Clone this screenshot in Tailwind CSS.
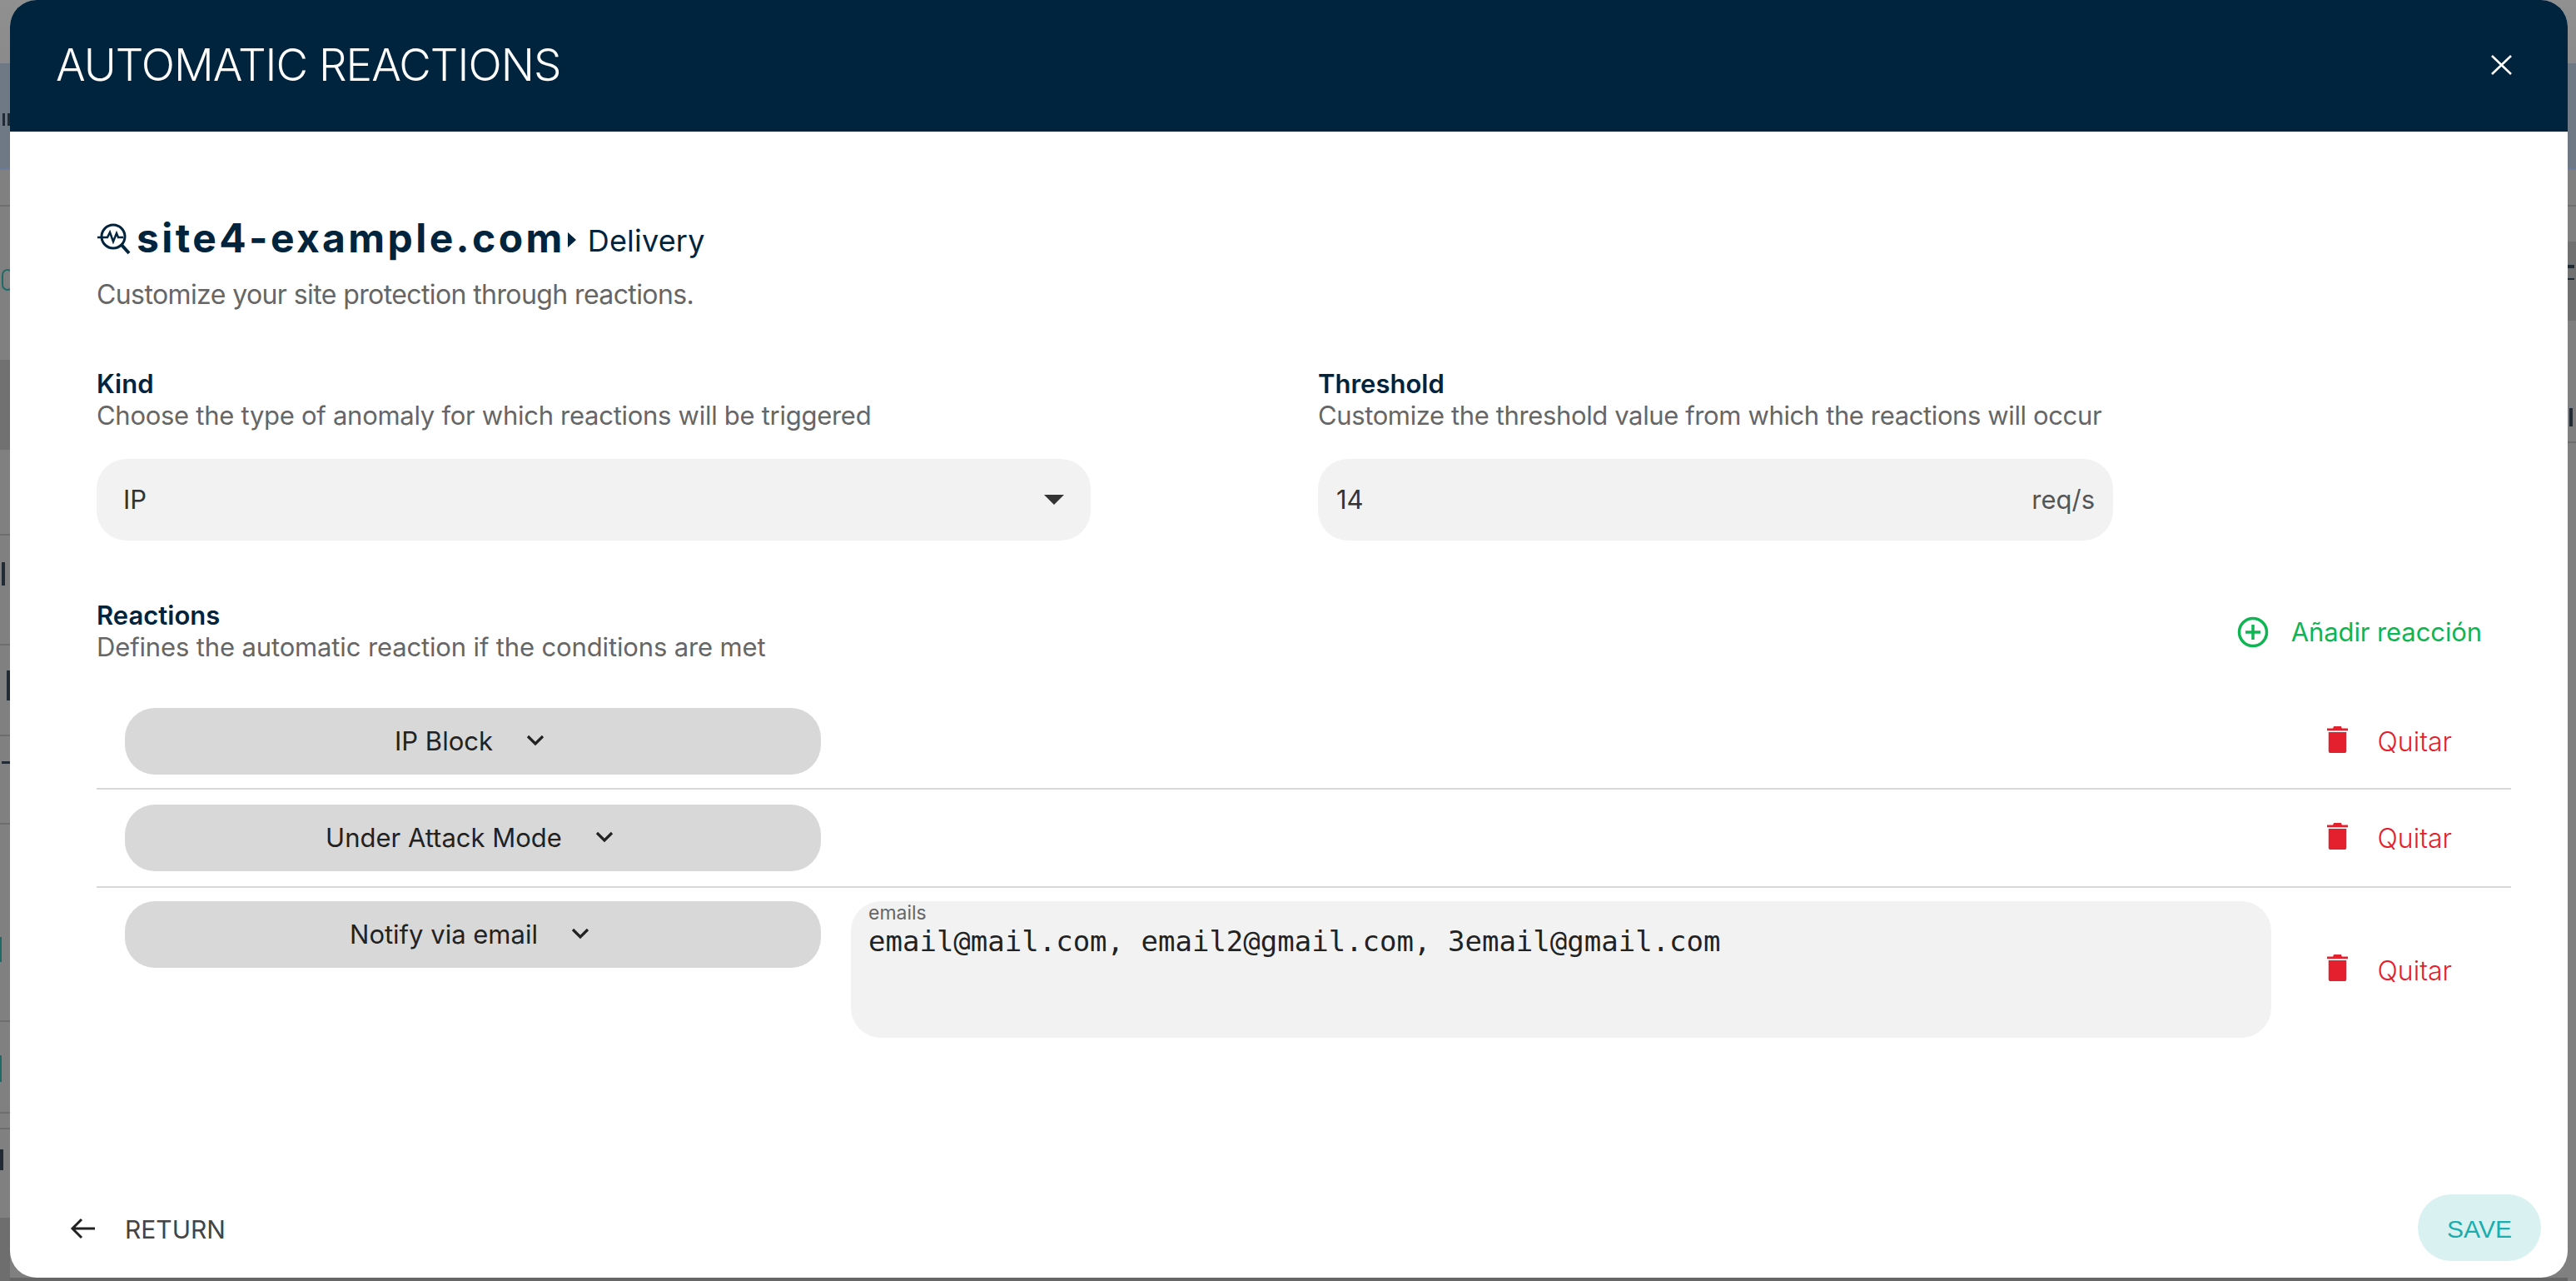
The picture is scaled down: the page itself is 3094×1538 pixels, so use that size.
<!DOCTYPE html>
<html lang="en">
<head>
    <meta charset="UTF-8">
    <title>Automatic Reactions</title>
    <script src="https://cdn.jsdelivr.net/npm/@tailwindcss/browser@4"></script>
</head>
<body class="h-[1538px] overflow-hidden flex bg-[linear-gradient(#909090_0,#808080_220px)] font-['Inter',sans-serif]">
    <!-- Page behind the modal, left edge -->
    <div class="w-3 shrink-0 flex flex-col">
        <div class="h-[76px]"></div>
        <div class="h-[128px] bg-[#6f7885] border-b-2 border-[#6a7c99] pt-[60px] flex gap-[3px] items-start justify-end"><div class="w-[3px] h-[15px] bg-[#222a33]"></div><div class="w-[3px] h-[15px] bg-[#222a33]"></div></div>
        <div class="h-[44px] border-b-2 border-[#6e6e6e]"></div>
        <div class="h-[184px] pt-[75px]"><div class="ml-[2px] w-[14px] h-[26px] rounded-full border-2 border-[#1f6a66]"></div></div>
        <div class="h-[108px] bg-[#717171]"></div>
        <div class="h-[103px] border-b-2 border-[#6e6e6e]"></div>
        <div class="h-[132px] border-b-2 border-[#6e6e6e] pt-[32px]"><div class="ml-[2px] w-1 h-[28px] bg-[#222a33]"></div></div>
        <div class="h-[109px] border-b-2 border-[#6e6e6e] pt-[30px]"><div class="ml-[8px] w-1 h-[36px] bg-[#222a33]"></div></div>
        <div class="h-[106px] border-b-2 border-[#6e6e6e] pt-[30px]"><div class="ml-[2px] w-[10px] h-[3px] bg-[#222a33]"></div></div>
        <div class="h-[165px] pt-[0px] flex flex-col justify-end"><div class="w-[2px] h-[30px] bg-[#1f6a66]"></div></div>
        <div class="h-[72px] border-b-2 border-[#6e6e6e]"></div>
        <div class="h-[40px]"></div>
        <div class="h-[70px] border-b-2 border-[#6e6e6e] pt-[0px]"><div class="w-[2px] h-[32px] bg-[#1f6a66]"></div></div>
        <div class="h-[19px] border-b-2 border-[#6e6e6e]"></div>
        <div class="h-[108px] border-b-2 border-[#6e6e6e] pt-[24px]"><div class="w-1 h-[25px] bg-[#222a33]"></div></div>
        <div class="flex-1 bg-[#6e6e6e]"></div>
    </div>

    <div class="w-[3072px] shrink-0 flex flex-col">
        <!-- Modal -->
        <div class="h-[1534px] shrink-0 bg-white rounded-[32px] overflow-hidden flex flex-col">
            <div class="h-[158px] shrink-0 bg-[#00243d] flex items-center justify-between pl-[55px] pr-[67px]">
                <h1 class="text-[53px] font-light text-white tracking-[-1px]">AUTOMATIC REACTIONS</h1>
                <svg class="w-[25px] h-[24px] -mt-[2px]" viewBox="0 0 25 24" fill="none" stroke="white" stroke-width="2.6"><path d="M1 1l23 22M24 1L1 23"/></svg>
            </div>

            <div class="flex-1 flex flex-col pl-[104px] pr-[68px] pt-[98px]">
                <!-- Site -->
                <div class="flex items-center h-[60px]">
                    <svg class="w-[42px] h-[42px] mr-[6px]" viewBox="0 0 42 42" fill="none" stroke="#00243d" stroke-width="3">
                        <circle cx="20" cy="19" r="14"/>
                        <path d="M30 29l9 10" stroke-width="4"/>
                        <path d="M1 20h12l3-6 4 11 4-10 2 5h6" stroke-width="2.5"/>
                    </svg>
                    <span class="text-[48px] font-bold text-[#00243d] tracking-[3.4px]">site4-example.com</span>
                    <svg class="w-[10px] h-[18px] ml-[3px] mt-[4px]" viewBox="0 0 10 18" fill="#00243d"><path d="M0 0l10 9-10 9z"/></svg>
                    <span class="ml-[14px] mt-[6px] text-[36px] tracking-[0.2px] text-[#00243d]">Delivery</span>
                </div>
                <p class="mt-[14px] text-[32px] text-[#666666] tracking-[-0.6px]">Customize your site protection through reactions.</p>

                <!-- Kind / Threshold -->
                <div class="mt-[64px] flex">
                    <div class="w-[1467px]">
                        <h3 class="text-[31px] leading-[38px] font-semibold text-[#00243d]">Kind</h3>
                        <p class="text-[31px] leading-[38px] text-[#666666] tracking-[-0.28px]">Choose the type of anomaly for which reactions will be triggered</p>
                        <div class="mt-[33px] w-[1194px] h-[98px] rounded-[36px] bg-[#f2f2f2] flex items-center justify-between pl-[32px] pr-[32px] text-[31px] text-[#333333]">
                            <span>IP</span>
                            <svg class="w-[24px] h-[12px]" viewBox="0 0 24 12" fill="#333333"><path d="M0 0h24L12 12z"/></svg>
                        </div>
                    </div>
                    <div>
                        <h3 class="text-[31px] leading-[38px] font-semibold text-[#00243d]">Threshold</h3>
                        <p class="text-[31px] leading-[38px] text-[#666666] tracking-[-0.38px]">Customize the threshold value from which the reactions will occur</p>
                        <div class="mt-[33px] w-[955px] h-[98px] rounded-[36px] bg-[#f2f2f2] flex items-center justify-between pl-[22px] pr-[22px] text-[31px] text-[#333333]">
                            <span>14</span>
                            <span class="text-[#555555]">req/s</span>
                        </div>
                    </div>
                </div>

                <!-- Reactions header -->
                <div class="mt-[71px] flex items-center justify-between">
                    <div>
                        <h3 class="text-[31px] leading-[38px] font-semibold text-[#00243d]">Reactions</h3>
                        <p class="text-[31px] leading-[38px] text-[#666666] tracking-[-0.14px]">Defines the automatic reaction if the conditions are met</p>
                    </div>
                    <div class="flex items-center pr-[35px] pt-[2px] text-[31px] tracking-[-0.1px] text-[#0fb553]">
                        <svg class="w-[38px] h-[38px] mr-[27px]" viewBox="0 0 38 38" fill="none" stroke="#0fb553" stroke-width="3.5"><circle cx="19" cy="19" r="16.5"/><path d="M19 10v18M10 19h18"/></svg>
                        <span>Añadir reacción</span>
                    </div>
                </div>

                <!-- Reaction rows -->
                <div class="mt-[50px]">
                    <div class="h-[102px] border-b-2 border-[#d8d8d8] flex pl-[34px] pr-[71px]">
                        <div class="mt-[4px] w-[836px] h-[80px] rounded-[36px] bg-[#d8d8d8] flex items-center justify-center gap-[40px] pr-[8px] text-[31px] text-[#222222]">
                            <span>IP Block</span>
                            <svg class="w-[22px] h-[14px] -mt-[2px]" viewBox="0 0 22 14" fill="none" stroke="#222222" stroke-width="3.2"><path d="M2 2l9 9 9-9"/></svg>
                        </div>
                        <div class="ml-auto mt-[21px] flex items-center h-[46px] text-[32px] font-light text-[#e5202e]">
                            <svg class="w-[27px] h-[34px] mr-[35px] -mt-[4px]" viewBox="0 0 28 38" fill="#e5202e"><path d="M9 1h10l1 3h8v3H0V4h8zM2 9h24v25a3 3 0 0 1-3 3H5a3 3 0 0 1-3-3z"/></svg>
                            <span class="mt-[2px]">Quitar</span>
                        </div>
                    </div>
                    <div class="h-[118px] border-b-2 border-[#d8d8d8] flex pl-[34px] pr-[71px]">
                        <div class="mt-[18px] w-[836px] h-[80px] rounded-[36px] bg-[#d8d8d8] flex items-center justify-center gap-[40px] pr-[8px] text-[31px] text-[#222222]">
                            <span>Under Attack Mode</span>
                            <svg class="w-[22px] h-[14px] -mt-[2px]" viewBox="0 0 22 14" fill="none" stroke="#222222" stroke-width="3.2"><path d="M2 2l9 9 9-9"/></svg>
                        </div>
                        <div class="ml-auto mt-[35px] flex items-center h-[46px] text-[32px] font-light text-[#e5202e]">
                            <svg class="w-[27px] h-[34px] mr-[35px] -mt-[4px]" viewBox="0 0 28 38" fill="#e5202e"><path d="M9 1h10l1 3h8v3H0V4h8zM2 9h24v25a3 3 0 0 1-3 3H5a3 3 0 0 1-3-3z"/></svg>
                            <span class="mt-[2px]">Quitar</span>
                        </div>
                    </div>
                    <div class="flex items-start pt-[16px] pl-[34px] pr-[71px]">
                        <div class="w-[836px] h-[80px] rounded-[36px] bg-[#d8d8d8] flex items-center justify-center gap-[40px] pr-[8px] text-[31px] text-[#222222]">
                            <span>Notify via email</span>
                            <svg class="w-[22px] h-[14px] -mt-[2px]" viewBox="0 0 22 14" fill="none" stroke="#222222" stroke-width="3.2"><path d="M2 2l9 9 9-9"/></svg>
                        </div>
                        <div class="ml-[36px] w-[1706px] h-[164px] rounded-[36px] bg-[#f2f2f2] pl-[21px] pt-[1px]">
                            <div class="text-[23px] leading-[26px] text-[#666666]">emails</div>
                            <div class="font-['DejaVu_Sans_Mono',monospace] text-[34px] leading-[42px] text-[#222222]">email@mail.com, email2@gmail.com, 3email@gmail.com</div>
                        </div>
                        <div class="ml-auto mt-[59px] flex items-center h-[46px] text-[32px] font-light text-[#e5202e]">
                            <svg class="w-[27px] h-[34px] mr-[35px] -mt-[4px]" viewBox="0 0 28 38" fill="#e5202e"><path d="M9 1h10l1 3h8v3H0V4h8zM2 9h24v25a3 3 0 0 1-3 3H5a3 3 0 0 1-3-3z"/></svg>
                            <span class="mt-[4px]">Quitar</span>
                        </div>
                    </div>
                </div>
            </div>

            <!-- Footer -->
            <div class="h-[120px] shrink-0 pt-[20px] flex items-start justify-between pl-[72px] pr-[32px]">
                <div class="flex items-center h-[84px] text-[30px] text-[#444444]">
                    <svg class="w-[32px] h-[26px] mr-[34px] -mt-[2px]" viewBox="0 0 32 26" fill="none" stroke="#222222" stroke-width="3"><path d="M30 13H3M14 2L3 13l11 11"/></svg>
                    <span>RETURN</span>
                </div>
                <div class="w-[148px] h-[80px] pt-[2px] rounded-[40px] bg-[#d9f1f1] flex items-center justify-center font-['Liberation_Sans',sans-serif] text-[30px] text-[#1aadad]">SAVE</div>
            </div>
        </div>
        <div class="flex-1 bg-[#666666]"></div>
    </div>

    <!-- Page behind the modal, right edge -->
    <div class="flex-1 flex flex-col">
        <div class="h-[76px]"></div>
        <div class="h-[128px] bg-[#6f7885] border-b-2 border-[#6a7c99]"></div>
        <div class="h-[44px] border-b-2 border-[#6e6e6e]"></div>
        <div class="h-[42px]"></div>
        <div class="h-[95px] bg-[#717171] pt-[28px]"><div class="w-[8px] h-[4px] bg-[#222a33]"></div><div class="mt-[12px] w-[8px] h-[2px] bg-[#222a33]"></div></div>
        <div class="h-[105px]"></div>
        <div class="h-[22px] w-[6px] border-r-4 border-[#222a33]"></div>
        <div class="h-[20px] border-b-2 border-[#6e6e6e]"></div>
    </div>
</body>
</html>
